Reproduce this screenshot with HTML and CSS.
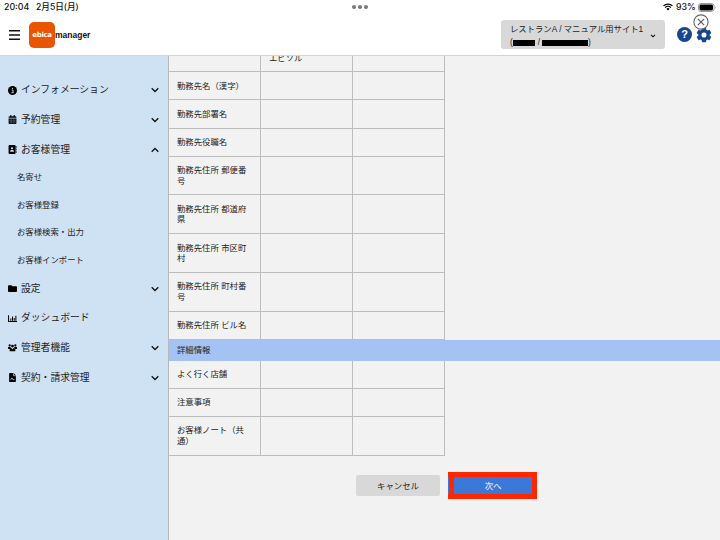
FILE: index.html
```html
<!DOCTYPE html>
<html lang="ja">
<head>
    <meta charset="UTF-8">
    <meta name="viewport" content="width=device-width, initial-scale=1.0">
    <title>ebica manager</title>
    <link rel="stylesheet" href="styles.css">
</head>
<body>
    <!-- Status bar -->
    <div class="status">
        <span class="clock">20:04</span>
        <span class="date">2月5日(月)</span>
        <div class="dots"><i></i><i></i><i></i></div>
        <svg class="wifi" viewBox="0 0 20 15"><path d="M1 5.2a13 13 0 0 1 18 0M4.2 8.7a8.4 8.4 0 0 1 11.6 0" fill="none" stroke="#000" stroke-width="2.5"/><path d="M6.6 11.2a5 5 0 0 1 6.8 0L10 14.6z"/></svg>
        <span class="percent">93%</span>
        <svg class="battery" viewBox="0 0 19 9"><rect x=".5" y=".5" width="15.5" height="8" rx="2.4" fill="none" stroke="#999"/><rect x="1.5" y="1.5" width="13.5" height="6" rx="1.4"/><path d="M17 3q1.4 1.5 0 3z" fill="#999"/></svg>
    </div>

    <header class="header">
        <svg class="menu-icon" viewBox="0 0 11 10"><path d="M0 .8h11M0 5h11M0 9.2h11" stroke="#111" stroke-width="1.5"/></svg>
        <div class="logo">ebica</div>
        <div class="brand">manager</div>
        <div class="site">
            <div class="site-text">
                <div class="site-name">レストランA / マニュアル用サイト1</div>
                <div class="site-code">(<i class="mask-short"></i>/<i class="mask-long"></i>)</div>
            </div>
            <svg class="site-arrow" viewBox="0 0 6 4"><path d="M1 .8l2 2 2-2" fill="none" stroke="#111" stroke-width="1.1"/></svg>
        </div>
        <div class="help">?</div>
        <svg class="gear" viewBox="0 0 24 24"><path fill="#17458f" fill-rule="evenodd" d="M9.200 1h5.600l.7 3.300 1.500.9 3.200-1.100 2.800 4.800-2.500 2.200v1.800l2.500 2.200-2.800 4.800-3.200-1.100-1.500.9-.7 3.300H9.200l-.7-3.300-1.500-.9-3.200 1.100L1 15.100l2.500-2.200v-1.800L1 8.900l2.800-4.800L7 5.200l1.500-.9zM12 8.200a3.800 3.800 0 1 0 0 7.600 3.800 3.800 0 0 0 0-7.600z"/></svg>
        <svg class="close" viewBox="0 0 16 16"><circle cx="8" cy="8" r="7.1" fill="#fff" fill-opacity=".85" stroke="#666" stroke-width="1.1"/><path d="M4.8 4.8l6.4 6.4M11.2 4.8l-6.4 6.4" stroke="#555" stroke-width="1.1"/></svg>
    </header>

    <div class="page">
        <nav class="sidebar">
            <div class="item">
                <svg class="icon" viewBox="0 0 16 16"><circle cx="8" cy="8" r="8"/><path d="M6.5 7h2.300v4.500M6 11.800h4.200" fill="none" stroke="#cfe2f4" stroke-width="1.500"/><circle cx="8" cy="4.200" r="1.200" fill="#cfe2f4"/></svg>
                <span>インフォメーション</span>
                <svg class="arrow" viewBox="0 0 8 6"><path d="M.7 1.200L4 4.500l3.300-3.300"/></svg>
            </div>
            <div class="item">
                <svg class="icon" viewBox="0 0 16 16"><path d="M1 4q0-2 2-2h1V0h2v2h4V0h2v2h1q2 0 2 2v1H1zM1 6h14v8q0 2-2 2H3q-2 0-2-2z"/><path d="M1 9.300h14M1 12.500h14M5.500 6v10M10.500 6v10" stroke="#cfe2f4" stroke-width=".5"/></svg>
                <span>予約管理</span>
                <svg class="arrow" viewBox="0 0 8 6"><path d="M.7 1.200L4 4.500l3.300-3.300"/></svg>
            </div>
            <div class="item">
                <svg class="icon" viewBox="0 0 16 16"><rect x="1" width="12.500" height="16" rx="2"/><path d="M14.500 2v3M14.500 6.500v3M14.500 11v3" stroke="#000" stroke-width="1.500"/><circle cx="7.200" cy="5.800" r="2" fill="#cfe2f4"/><path d="M3.700 12q0-3 2.500-3h2q2.500 0 2.500 3z" fill="#cfe2f4"/></svg>
                <span>お客様管理</span>
                <svg class="arrow" viewBox="0 0 8 6"><path d="M.7 4.800L4 1.500l3.300 3.300"/></svg>
            </div>
            <div class="subitem">名寄せ</div>
            <div class="subitem">お客様登録</div>
            <div class="subitem">お客様検索・出力</div>
            <div class="subitem">お客様インポート</div>
            <div class="item">
                <svg class="icon" viewBox="0 0 16 16"><path d="M0 3.500Q0 2 1.500 2H6l2 2h6.500Q16 4 16 5.500v7q0 1.500-1.500 1.500h-13Q0 14 0 12.500z"/></svg>
                <span>設定</span>
                <svg class="arrow" viewBox="0 0 8 6"><path d="M.7 1.200L4 4.500l3.300-3.300"/></svg>
            </div>
            <div class="item">
                <svg class="icon" viewBox="0 0 16 16"><path d="M1 2v11.500h15M5 12V8M8 12V4.500M11 12V7M14 12V3" fill="none" stroke="#000" stroke-width="1.800"/></svg>
                <span>ダッシュボード</span>
            </div>
            <div class="item">
                <svg class="icon" viewBox="0 0 16 16"><circle cx="3" cy="4" r="2"/><circle cx="8" cy="5.500" r="2.500"/><circle cx="13" cy="4" r="2"/><path d="M0 10V8q0-1.500 1.500-1.500H4L5.500 9 3.500 11zM16 10V8q0-1.500-1.500-1.500H12L10.500 9l2 2zM3 14.500V12q0-3 3-3l2 2 2-2q3 0 3 3v2.500z"/></svg>
                <span>管理者機能</span>
                <svg class="arrow" viewBox="0 0 8 6"><path d="M.7 1.200L4 4.500l3.300-3.300"/></svg>
            </div>
            <div class="item">
                <svg class="icon" viewBox="0 0 16 16"><path d="M2 1.500Q2 0 3.500 0H10l4 4.500v10q0 1.500-1.500 1.500h-9Q2 16 2 14.500z"/><path d="M9.800.5v4.300h4M4.500 12.500l2.500-4 1.500 3h3" fill="none" stroke="#cfe2f4" stroke-width="1.200"/></svg>
                <span>契約・請求管理</span>
                <svg class="arrow" viewBox="0 0 8 6"><path d="M.7 1.200L4 4.500l3.300-3.300"/></svg>
            </div>
        </nav>

        <main class="content">
            <div class="row first"><div></div><div>エビソル</div><div></div></div>
            <div class="row"><div>勤務先名（漢字）</div><div></div><div></div></div>
            <div class="row"><div>勤務先部署名</div><div></div><div></div></div>
            <div class="row"><div>勤務先役職名</div><div></div><div></div></div>
            <div class="row tall"><div>勤務先住所 郵便番<br>号</div><div></div><div></div></div>
            <div class="row tall"><div>勤務先住所 都道府<br>県</div><div></div><div></div></div>
            <div class="row tall"><div>勤務先住所 市区町<br>村</div><div></div><div></div></div>
            <div class="row tall"><div>勤務先住所 町村番<br>号</div><div></div><div></div></div>
            <div class="row"><div>勤務先住所 ビル名</div><div></div><div></div></div>
            <div class="section">詳細情報</div>
            <div class="row"><div>よく行く店舗</div><div></div><div></div></div>
            <div class="row"><div>注意事項</div><div></div><div></div></div>
            <div class="row tall"><div>お客様ノート（共<br>通）</div><div></div><div></div></div>

            <div class="buttons">
                <button class="cancel">キャンセル</button>
                <div class="highlight"><button class="next">次へ</button></div>
            </div>
        </main>
    </div>
</body>
</html>
```
FILE: styles.css
```css
* {
    box-sizing: border-box;
    margin: 0;
    padding: 0;
}
body {
    width: 720px;
    height: 540px;
    overflow: hidden;
    font-family: "Liberation Sans", "Noto Sans CJK JP", sans-serif;
    background: #fff;
    color: #222;
}
svg {
    display: block;
    flex: none;
}
.status {
    position: relative;
    display: flex;
    align-items: center;
    height: 14px;
    padding: 0 3px 0 4px;
    font-family: Inter, "Noto Sans CJK JP", sans-serif;
    font-size: 9px;
    font-weight: 500;
    line-height: 14px;
    color: #111;
    white-space: nowrap;
}
.clock {
    width: 32px;
    font-size: 8.8px;
}
.date {
    font-size: 8.6px;
}
.dots {
    position: absolute;
    left: 352px;
    top: 5px;
    display: flex;
    gap: 2px;
}
.dots i {
    width: 4px;
    height: 4px;
    border-radius: 50%;
    background: #777;
}
.wifi {
    width: 10px;
    height: 8px;
    margin-left: auto;
}
.percent {
    width: 20px;
    margin: 0 2px 0 3px;
    font-size: 8.8px;
}
.battery {
    width: 19px;
    height: 9px;
}
.header {
    position: relative;
    display: flex;
    align-items: center;
    height: 42px;
    padding: 0 8px 0 9px;
    border-bottom: 1px solid #d4d4d4;
}
.menu-icon {
    width: 11px;
    height: 10px;
    margin-right: 9px;
}
.logo {
    width: 26px;
    height: 26px;
    border-radius: 5px;
    background: #ea5504;
    color: #fff;
    font: bold 7px/26px "DejaVu Sans", sans-serif;
    letter-spacing: -0.3px;
    text-align: center;
}
.brand {
    font: bold 8.5px/26px "Liberation Sans", sans-serif;
    color: #111;
}
.site {
    display: flex;
    align-items: center;
    justify-content: space-between;
    width: 164px;
    height: 29px;
    margin-left: auto;
    padding: 3px 9px 0;
    border-radius: 3px;
    background: #d8d8d8;
    font-size: 8.35px;
    line-height: 13px;
    color: #222;
    white-space: nowrap;
}
.site-code {
    display: flex;
    align-items: center;
}
.site-code i {
    height: 6px;
    background: #000;
}
.mask-short {
    width: 22px;
    margin-right: 3px;
}
.mask-long {
    width: 46px;
    margin-left: 2px;
}
.site-arrow {
    width: 6px;
    height: 4px;
}
.help {
    width: 15px;
    height: 15px;
    margin-left: 12px;
    border-radius: 50%;
    background: #17458f;
    color: #fff;
    font: bold 11px/15px "Liberation Sans", sans-serif;
    text-align: center;
}
.gear {
    width: 16px;
    height: 16px;
    margin-left: 4px;
}
.close {
    position: absolute;
    left: 693px;
    top: 0;
    width: 16px;
    height: 16px;
}
.page {
    display: flex;
    height: 484px;
}
.sidebar {
    width: 169px;
    padding-top: 19.6px;
    border-right: 1px solid #b5b8bc;
    background: #cfe2f4;
    color: #1c1c1c;
}
.item {
    display: flex;
    align-items: center;
    height: 29.6px;
    padding: 0 9px 0 8px;
    font-size: 9.8px;
    line-height: 14px;
}
.icon {
    width: 9px;
    height: 9px;
    margin-right: 4px;
}
.arrow {
    width: 8px;
    height: 6px;
    margin-left: auto;
    fill: none;
    stroke: #111;
    stroke-width: 1.3;
}
.subitem {
    height: 27.4px;
    padding-left: 17px;
    font-size: 8.4px;
    line-height: 27.4px;
}
.content {
    flex: 1;
    overflow: hidden;
    background: #f2f2f2;
    font-size: 8.4px;
    line-height: 10.6px;
}
.row {
    display: grid;
    grid-template-columns: repeat(3, 92px);
    height: 28.15px;
}
.row div {
    display: flex;
    align-items: center;
    padding-left: 8px;
    border-right: 1px solid #bdbdbd;
    border-bottom: 1px solid #bdbdbd;
    white-space: nowrap;
}
.row.tall {
    height: 38.75px;
}
.row.first {
    height: 16.3px;
}
/* scrolled partly under the header */
.row.first div {
    align-items: flex-start;
    line-height: 5px;
}
.section {
    height: 21px;
    padding-left: 8px;
    background: #a4c2f4;
    line-height: 21px;
}
.buttons {
    display: flex;
    align-items: center;
    gap: 8px;
    margin: 16px 0 0 187px;
}
.buttons button {
    display: block;
    border: none;
    font-family: inherit;
    font-size: 8.4px;
}
.cancel {
    width: 84px;
    height: 21px;
    border-radius: 2px;
    background: #d8d8d8;
    color: #222;
}
.highlight {
    width: 89px;
    border: solid #ff2600;
    border-width: 5px 5px 5px 6px;
    border-left: 0;
    background: linear-gradient(to right, #3c78d8 1px, #ff2600 1px);
    background-clip: border-box;
    padding-left: 6px;
}
.next {
    width: 78px;
    height: 17px;
    background: #3c78d8;
    color: #fff;
}
```
